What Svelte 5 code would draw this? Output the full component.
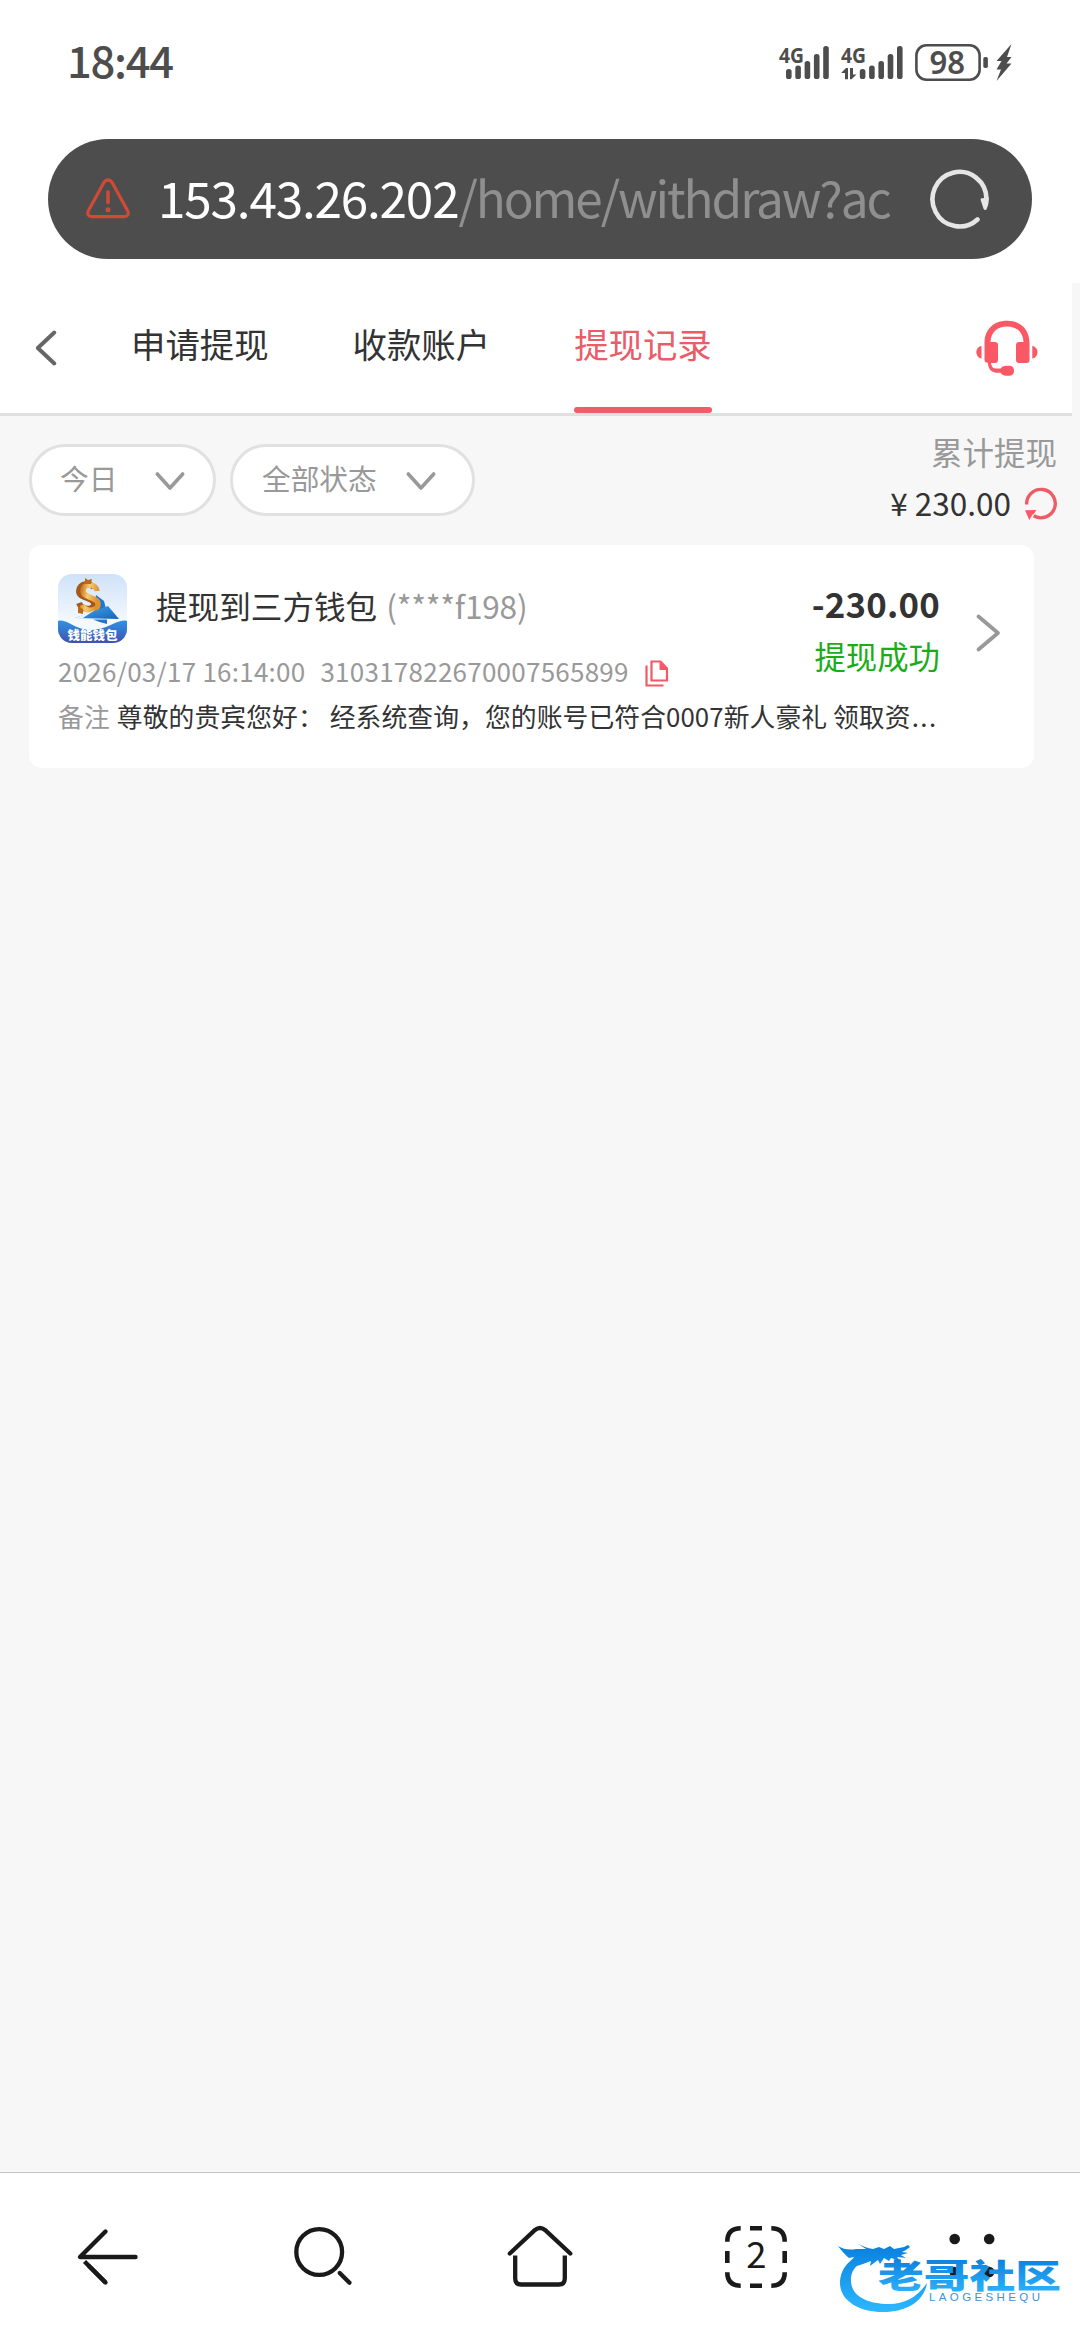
<script lang="ts">
	interface Tab {
		id: string;
		label: string;
	}

	const tabs: Tab[] = [
		{ id: 'apply', label: '申请提现' },
		{ id: 'account', label: '收款账户' },
		{ id: 'record', label: '提现记录' }
	];

	const filters = [
		{ id: 'date', label: '今日' },
		{ id: 'status', label: '全部状态' }
	];

	const records = [
		{
			title: '提现到三方钱包',
			account: '(****f198)',
			time: '2026/03/17 16:14:00',
			orderNo: '310317822670007565899',
			amount: '-230.00',
			status: '提现成功',
			remark: '尊敬的贵宾您好： 经系统查询，您的账号已符合0007新人豪礼 领取资'
		}
	];

	// top edge of each signal bar
	const bars = [23, 19.5, 15, 8, 0];

	let activeTab = $state('record');
</script>

<div class="screen">
	<div class="status-bar">
		<span class="time">18:44</span>
		<svg class="status-icons" width="236" height="48" viewBox="-1 -6 236 48">
			<g fill="#4d4d4d">
				<text class="net" x="0" y="18.5" textLength="25" lengthAdjust="spacingAndGlyphs">4G</text>
				{#each bars as top, i}
					<rect x={7 + i * 9.3} y={top + 2} width="5.6" height={33 - top} rx="2.6" />
				{/each}
				<text class="net" x="62" y="18.5" textLength="25" lengthAdjust="spacingAndGlyphs">4G</text>
				<path d="M62.500 28.500l4.500-4.500h2v11.300h-3V29h-3.500zM71 24h3v6.500h3.500L72.500 35.300H71z" />
				{#each bars as top, i}
					<rect x={80.8 + i * 9.3} y={top + 2} width="5.6" height={33 - top} rx="2.6" />
				{/each}
				<rect x="204.300" y="13" width="4.600" height="11" rx="1.800" />
				<path d="M232.500 0L217.500 17h5l-5 8.500h4.500L217.500 37l15-17.500h-5l5-6.500h-4.500z" />
				<text class="battery" x="150.500" y="29.800" textLength="35.500" lengthAdjust="spacingAndGlyphs">98</text>
			</g>
			<rect x="137.400" y="1.300" width="63.200" height="34.400" rx="10" fill="none" stroke="#4d4d4d" stroke-width="2.600" />
		</svg>
	</div>

	<div class="address">
		<svg width="46" height="42" viewBox="0 0 46 42" fill="none" stroke="#d04a34" stroke-linecap="round" stroke-linejoin="round">
			<path d="M19.300 3.800Q23 .2 26.700 3.800L42.500 32.500Q44.800 38 39.500 38.700H6.500Q1.200 38 3.500 32.500z" stroke-width="3.200" />
			<path d="M23 14v10.500" stroke-width="3.600" />
			<circle cx="23" cy="31.800" r="1.100" stroke-width="2.800" />
		</svg>
		<div class="url"><span class="host">153.43.26.202</span><span class="path">/home/withdraw?ac</span></div>
		<svg width="62" height="62" viewBox="0 0 62 62" fill="none">
			<path d="M57.500 31A27 27.300 0 1 0 48.500 51.500" stroke="#e6e6e6" stroke-width="4.600" stroke-linecap="round" />
			<path d="M51.500 31.500q0-1.500 2-1.300l6-1q1 6-2 12-1.500 2-3-.5z" fill="#e6e6e6" />
		</svg>
	</div>

	<main class="page">
		<header>
			<button class="back" aria-label="返回">
				<svg width="24" height="38" viewBox="0 0 24 38" fill="none" stroke="#666" stroke-width="4" stroke-linecap="round" stroke-linejoin="round">
					<path d="M20.300 3.500L3.800 19l16.500 15.500" />
				</svg>
			</button>
			<nav class="tabs">
				{#each tabs as tab}
					<button class:active={tab.id === activeTab} onclick={() => (activeTab = tab.id)}>{tab.label}</button>
				{/each}
			</nav>
			<button class="service" aria-label="客服">
				<svg width="62" height="56" viewBox="0 0 62 56" fill="#fb5866">
					<path d="M8.500 23C8.500 9 18 .7 31 .7S53.500 9 53.500 23v17q0 3-3 3H43q-3 0-3-3V25q0-3 3-3h4.500C47 12 40.500 6.500 31 6.500S15 12 14.500 22H19q3 0 3 3v15q0 3-3 3h-4q.5 5.500 5 5.500h4.500c1.500-2 3-2.800 6-2.800h2.500q5 0 5 5t-5 5h-3q-3.500 0-5.500-3H20q-7.500-.7-8.300-10Q8.500 42.500 8.500 40z" />
					<path d="M5.500 25.800v12.900Q.300 37 .300 32.200t5.200-6.400zM56.300 25.800v12.900q5.200-1.700 5.200-6.500t-5.200-6.400z" />
				</svg>
			</button>
		</header>

		<section class="toolbar">
			<div class="filters">
				{#each filters as filter}
					<button class={filter.id}>
						{filter.label}
						<svg width="32" height="22" viewBox="0 0 32 22" fill="none" stroke="#999" stroke-width="3.600" stroke-linecap="round" stroke-linejoin="round">
							<path d="M3.300 4L16 18 28.700 4" />
						</svg>
					</button>
				{/each}
			</div>
			<div class="total">
				<span class="total-label">累计提现</span>
				<div class="total-value">
					<span class="yen">¥</span><span>230.00</span>
					<svg width="34" height="34" viewBox="0 0 34 34">
						<path d="M2.700 17.500a14.300 14.200 0 1 1 7 11.300" fill="none" stroke="#ee5b67" stroke-width="3.400" />
						<path d="M1 23.200l11.500-.2-3 4.200-1 .3-3.200 5.600z" fill="#fb5866" />
					</svg>
				</div>
			</div>
		</section>

		{#each records as record}
			<article class="record">
				<div class="info">
					<div class="title">
						<svg class="wallet" width="69" height="69" viewBox="0 0 69 69">
							<defs>
								<linearGradient id="sky" x1="0" y1="0" x2="0" y2="1">
									<stop offset="0" stop-color="#cfe2f8" />
									<stop offset="0.700" stop-color="#f4f9fe" />
								</linearGradient>
								<linearGradient id="wave" x1="0" y1="0" x2="0" y2="1">
									<stop offset="0" stop-color="#2f92e4" />
									<stop offset="1" stop-color="#4051b0" />
								</linearGradient>
								<linearGradient id="gold" x1="0" y1="0" x2="1" y2="0.300">
									<stop offset="0" stop-color="#c67a22" />
									<stop offset="0.450" stop-color="#f8cd70" />
									<stop offset="1" stop-color="#dd9232" />
								</linearGradient>
								<linearGradient id="boat" x1="0" y1="0" x2="1" y2="1">
									<stop offset="0" stop-color="#4aa8ea" />
									<stop offset="1" stop-color="#1264bd" />
								</linearGradient>
							</defs>
							<rect width="69" height="69" fill="url(#sky)" />
							<path d="M38 21l8 6 2 8-12 5z" fill="#1f76cd" />
							<path d="M36 14C33 8 21 9 21 17c0 8 15 6 15 13 0 6-12 7-15-1" fill="none" stroke="#a4591a" stroke-width="6" />
							<path d="M39 17C38 9 25 9 25 17c0 7 15 6 15 13 0 8-13 8-16 1" fill="none" stroke="url(#gold)" stroke-width="5.500" />
							<path d="M27 4l3 2 4-1-1 5h-6zM20 33l5 2v5l-5-1z" fill="#bb6b18" />
							<path d="M17 44l33-12 11 13z" fill="url(#boat)" />
							<path d="M17 44l20-8-12 8z" fill="#e8f2fc" />
							<path d="M35 45.500h14v4.500q-6-1-14-4.500z" fill="#2674ca" />
							<path d="M0 47C9 44 16 56 33 56S60 44 69 47v22H0z" fill="url(#wave)" />
							<text x="9.500" y="65.500" textLength="50" lengthAdjust="spacingAndGlyphs" fill="#fff">钱能钱包</text>
						</svg>
						<span>{record.title}</span>
						<span class="account">{record.account}</span>
					</div>
					<div class="meta">
						<span class="date">{record.time}</span>
						<span class="order">{record.orderNo}</span>
						<svg width="24" height="27" viewBox="0 0 24 27" fill="none" stroke="#ee5b67" stroke-width="2.200">
							<path d="M1.500 5.500v20H18.500" />
							<path d="M6.500 1.500h9l6.500 7v12H6.500z" />
							<path d="M14.500 1l8.500 9h-8.500z" fill="#fb5866" stroke="none" />
						</svg>
					</div>
				</div>
				<div class="result">
					<span class="amount">{record.amount}</span>
					<span class="state">{record.status}</span>
				</div>
				<svg class="arrow" width="26" height="40" viewBox="0 0 26 40" fill="none" stroke="#999" stroke-width="3.800" stroke-linecap="round" stroke-linejoin="round">
					<path d="M3.500 3.500L23 20 3.500 36.500" />
				</svg>
				<p class="remark"><span class="label">备注</span>{record.remark}<span class="dots">...</span></p>
			</article>
		{/each}
	</main>

	<footer>
		<button aria-label="后退">
			<svg width="66" height="66" viewBox="0 0 66 66" fill="none" stroke="#1a1a1a" stroke-width="4.400" stroke-linecap="round">
				<path d="M30.500 7.500L5 33h55.500" stroke-linejoin="round" />
				<path d="M30.500 58.500L9.500 37.500" stroke-linecap="butt" />
				<path d="M30.500 58.500L14 42" />
			</svg>
		</button>
		<button aria-label="搜索">
			<svg width="66" height="66" viewBox="0 0 66 66" fill="none" stroke="#1a1a1a" stroke-width="4.300" stroke-linecap="round">
				<circle cx="28.200" cy="28" r="22.900" />
				<path d="M48.700 49l9.800 9.800" />
			</svg>
		</button>
		<button aria-label="主页">
			<svg width="66" height="66" viewBox="0 0 66 66" fill="none" stroke="#1a1a1a" stroke-width="4.300" stroke-linecap="round">
				<path d="M2.800 29.500L28 6q5-4 10 0l25.300 23.500" />
				<path d="M8.200 31.500v23q0 6 6 6h37.600q6 0 6-6v-23" stroke-linecap="butt" />
			</svg>
		</button>
		<button aria-label="标签页">
			<svg width="66" height="66" viewBox="0 0 66 66" fill="none" stroke="#1a1a1a" stroke-width="4.600">
				<path d="M4.300 17.700Q4.300 4.300 17.700 4.300M48.300 4.300Q61.700 4.300 61.700 17.700M61.700 48.300Q61.700 61.700 48.300 61.700M17.700 61.700Q4.300 61.700 4.300 48.300" />
				<path d="M27 4.300h12M27 61.700h12M4.300 27v12M61.700 27v12" />
				<text x="33.500" y="44" text-anchor="middle" fill="#1a1a1a" stroke="none">2</text>
			</svg>
		</button>
		<button aria-label="更多">
			<svg width="66" height="66" viewBox="0 0 66 66" fill="#1a1a1a">
				<circle cx="15.700" cy="15" r="5.300" />
				<circle cx="50.200" cy="15" r="5.300" />
				<circle cx="15.700" cy="48" r="5.300" />
				<circle cx="50.200" cy="48" r="5.300" />
			</svg>
		</button>
	</footer>

	<svg class="brand" width="230" height="80" viewBox="0 0 230 80">
		<defs>
			<linearGradient id="blue" gradientUnits="userSpaceOnUse" x1="0" y1="8" x2="0" y2="76">
				<stop offset="0" stop-color="#0a7fdd" />
				<stop offset="1" stop-color="#2bb8ff" />
			</linearGradient>
			<linearGradient id="letters" x1="0" y1="0" x2="0" y2="1">
				<stop offset="0.200" stop-color="#0d82df" />
				<stop offset="0.900" stop-color="#2db2fb" />
			</linearGradient>
		</defs>
		<g fill="url(#blue)">
			<path d="M36 15C16 18 3 31 3 47c0 18 20 30 46 29 22-1 38-11 41-29-9 13-21 21-38 21C30 68 15 60 14 46 13 33 22 24 40 23z" />
			<path d="M1 10q8 5 18 3l10 0-9-6q8 5 16 6l6-2 5 2 6-3 4 3 10-2 4-2 2 2-4 3-4 2 6 1-7 2 5 3-9-1 3 4-9-3-2 3-5-3-4 6-2-4-8 6 1-5-8 3-6 2 2-6-9 3 4-6-5 1Q7 18 1 10z" />
		</g>
		<text class="brand-name" x="41" y="51.500" textLength="183" lengthAdjust="spacingAndGlyphs" fill="url(#letters)">老哥社区</text>
		<text class="brand-sub" x="92" y="65" textLength="111" fill="#3a93dc">LAOGESHEQU</text>
	</svg>
</div>

<style>
	:global(body) {
		margin: 0;
		background: #fff;
	}
	.screen {
		position: relative;
		display: flex;
		flex-direction: column;
		width: 1080px;
		height: 2340px;
		overflow: hidden;
		background: #fff;
		color: #333;
		font-family: "Noto Sans CJK SC", "Noto Sans", sans-serif;
	}
	svg {
		display: block;
		flex: none;
	}
	button {
		border: none;
		padding: 0;
		margin: 0;
		background: transparent;
		font: inherit;
		color: inherit;
	}
	.status-bar {
		display: flex;
		justify-content: space-between;
		align-items: center;
		height: 122px;
		margin-bottom: 17px;
		padding: 0 66px 0 67px;
	}
	.time {
		font-size: 43.5px;
		font-weight: 500;
		letter-spacing: -1.3px;
		line-height: 60px;
		color: #4d4d4d;
		margin-top: -2px;
	}
	.status-icons {
		overflow: visible;
		margin-top: 1px;
	}
	.status-icons .net {
		font-family: "Noto Sans", sans-serif;
		font-size: 22px;
		font-weight: 700;
	}
	.status-icons .battery {
		font-family: "Noto Sans", sans-serif;
		font-size: 32px;
		font-weight: 600;
	}
	.address {
		display: flex;
		align-items: center;
		height: 120px;
		margin: 0 48px 24px;
		padding: 0 41px 0 37px;
		box-sizing: border-box;
		border-radius: 60px;
		background: #4d4d4d;
	}
	.url {
		flex: 1;
		margin-left: 27px;
		font-size: 49.5px;
		line-height: 120px;
		white-space: nowrap;
		margin-top: -4px;
	}
	.host {
		color: #fff;
		letter-spacing: -1.2px;
	}
	.path {
		color: #8f8f8f;
		letter-spacing: -2.1px;
	}
	.page {
		flex: 1;
		background: #f7f7f7;
	}
	header {
		display: flex;
		align-items: center;
		width: 1072px;
		height: 133px;
		box-sizing: border-box;
		border-bottom: 3px solid #e0e0e0;
		padding: 0 34px 0 34px;
		background: #fff;
	}
	.tabs {
		display: flex;
		flex: 1;
		gap: 84px;
		margin-left: 73px;
		height: 130px;
	}
	.tabs button {
		font-size: 34.4px;
		line-height: 120px;
		box-sizing: border-box;
		padding-bottom: 4px;
		position: relative;
		display: flex;
	}
	.tabs .active {
		color: #e95c68;
	}
	.tabs .active::after {
		content: '';
		position: absolute;
		left: 0;
		bottom: 0;
		width: 100%;
		height: 6.5px;
		border-radius: 3px;
		background: #f05c68;
	}
	.toolbar {
		display: flex;
		justify-content: space-between;
		height: 129px;
		padding: 0 23px 0 29px;
	}
	.filters {
		display: flex;
		gap: 14px;
		padding-top: 28px;
	}
	.filters button {
		display: flex;
		align-items: center;
		justify-content: space-between;
		box-sizing: border-box;
		height: 72px;
		border: 3px solid #e1e1e1;
		border-radius: 36px;
		background: #fff;
		font-size: 28.7px;
		line-height: 58px;
		padding-bottom: 5px;
		color: #999;
	}
	.filters svg {
		margin-top: 6px;
	}
	.filters .date {
		width: 187px;
		padding-left: 28px;
		padding-right: 27px;
	}
	.filters .status {
		width: 245px;
		padding-left: 29px;
		padding-right: 35px;
	}
	.total {
		display: flex;
		flex-direction: column;
		align-items: flex-end;
		padding-top: 10px;
		font-size: 31.5px;
	}
	.total-label {
		line-height: 50px;
		color: #999;
	}
	.total-value {
		display: flex;
		align-items: center;
		height: 50px;
		line-height: 50px;
		margin-top: 1px;
	}
	.total-value svg {
		margin-left: 13px;
		margin-top: 4px;
		margin-right: -1px;
	}
	.yen {
		margin-right: 7px;
	}
	.record {
		display: grid;
		grid-template-columns: 1fr auto 26px;
		grid-template-rows: 125px 98px;
		width: 1005px;
		height: 223px;
		box-sizing: border-box;
		margin-left: 29px;
		padding: 0 33px 0 29px;
		border-radius: 13px;
		background: #fff;
	}
	.info {
		padding-top: 29px;
	}
	.title {
		display: flex;
		align-items: center;
		height: 69px;
		font-size: 31.6px;
		line-height: 60px;
		white-space: nowrap;
	}
	.title span {
		margin-top: -8px;
	}
	.wallet {
		margin-right: 29px;
		border-radius: 14px;
	}
	.wallet text {
		font-size: 12px;
		font-weight: 900;
	}
	.title .account {
		margin-left: 9px;
		letter-spacing: -0.2px;
		color: #999;
	}
	.meta {
		display: flex;
		align-items: center;
		height: 36px;
		margin-top: 10px;
		font-size: 26px;
		line-height: 36px;
		letter-spacing: 0.25px;
		white-space: nowrap;
		color: #999;
	}
	.order {
		margin-left: 15px;
	}
	.meta svg {
		margin-left: 16px;
		margin-top: 5px;
	}
	.result {
		display: flex;
		flex-direction: column;
		align-items: flex-end;
		margin-right: 35px;
	}
	.amount {
		margin-top: 35px;
		font-size: 34.8px;
		font-weight: 700;
		line-height: 46px;
		letter-spacing: 0.2px;
	}
	.state {
		margin-top: 5px;
		font-size: 31.4px;
		line-height: 50px;
		color: #1aad19;
	}
	.arrow {
		margin-top: 68px;
	}
	.remark {
		grid-column: 1 / 3;
		margin: 28px 0 0;
		font-size: 25.8px;
		line-height: 36px;
		height: 36px;
		letter-spacing: 0.08px;
		white-space: nowrap;
	}
	.remark .label {
		margin-right: 7px;
		color: #999;
	}
	.remark .dots {
		margin-left: 1px;
		letter-spacing: 1.5px;
	}
	footer {
		display: flex;
		align-items: flex-start;
		height: 168px;
		box-sizing: border-box;
		border-top: 1px solid #c4c4c4;
		padding-top: 51px;
		background: #fff;
	}
	footer button {
		display: flex;
		justify-content: center;
		flex: 1;
	}
	footer text {
		font-size: 36.5px;
	}
	.brand {
		position: absolute;
		left: 837px;
		top: 2236px;
	}
	.brand-name {
		font-size: 33px;
		font-weight: 900;
	}
	.brand-sub {
		font-family: "Liberation Sans", sans-serif;
		font-size: 11.5px;
	}
</style>
